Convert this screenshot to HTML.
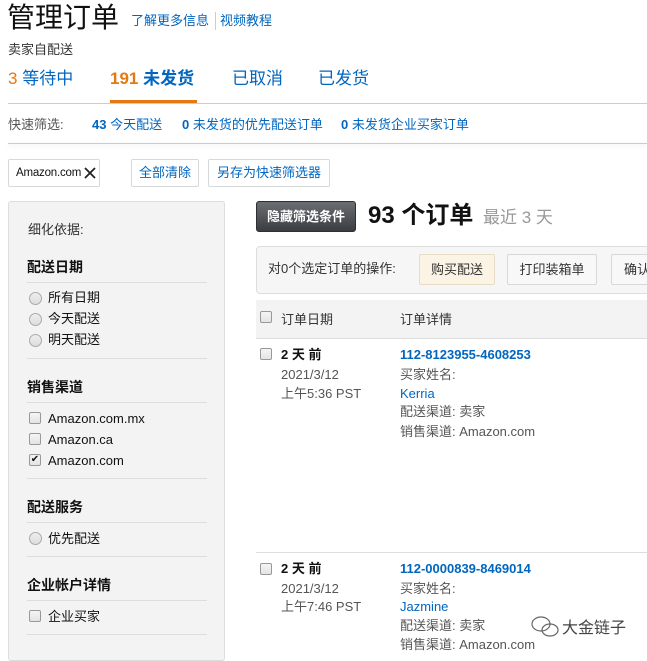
<!DOCTYPE html>
<html><head><meta charset="utf-8"><style>
*{margin:0;padding:0;box-sizing:border-box}
body{width:647px;height:655px;overflow:hidden;background:#fff;font-family:"Liberation Sans","Noto Sans CJK SC",sans-serif;color:#111;position:relative;font-size:13px;line-height:16px}
.a{position:absolute;white-space:nowrap}
.blue{color:#0066c0}
.g{color:#555}
.line{position:absolute;height:1px;background:#ddd}
.btn{position:absolute;border:1px solid #d5d9d9;border-radius:2px;background:#fff;text-align:center;font-size:13px;line-height:26px;white-space:nowrap}
.rad{position:absolute;width:13px;height:13px;border-radius:50%;border:1px solid #aaa;background:linear-gradient(#eee,#ddd)}
.cb{position:absolute;width:12px;height:12px;border:1px solid #999;border-radius:2px;background:linear-gradient(#f5f5f5,#e3e3e3)}
.side{font-size:13px}
.h{font-weight:bold;font-size:14px}
</style></head><body>
<div class="a" style="left:7px;top:2px;font-size:28px;line-height:32px;color:#111">管理订单</div>
<div class="a blue" style="left:131px;top:13px">了解更多信息</div>
<div style="position:absolute;left:215px;top:12px;width:1px;height:18px;background:#ccc"></div>
<div class="a blue" style="left:220px;top:13px">视频教程</div>
<div class="a" style="left:8px;top:42px;color:#333">卖家自配送</div>
<div class="a" style="left:8px;top:69px;font-size:17px;line-height:20px;color:#0066c0"><span style="color:#e47911">3</span> 等待中</div>
<div class="a" style="left:110px;top:69px;font-size:17px;line-height:20px;font-weight:bold;color:#0066c0"><span style="color:#e47911">191</span> 未发货</div>
<div class="a blue" style="left:232px;top:69px;font-size:17px;line-height:20px">已取消</div>
<div class="a blue" style="left:318px;top:69px;font-size:17px;line-height:20px">已发货</div>
<div class="line" style="left:8px;top:103px;width:639px;background:#ccc"></div>
<div style="position:absolute;left:110px;top:100px;width:87px;height:3px;background:#e47911"></div>
<div class="a" style="left:8px;top:117px;color:#555">快速筛选:</div>
<div class="a blue" style="left:92px;top:117px"><b>43</b> 今天配送</div>
<div class="a blue" style="left:182px;top:117px"><b>0</b> 未发货的优先配送订单</div>
<div class="a blue" style="left:341px;top:117px"><b>0</b> 未发货企业买家订单</div>
<div class="line" style="left:8px;top:143px;width:639px;background:#ccc;box-shadow:0 2px 4px #ddd"></div>
<div class="btn" style="left:8px;top:159px;width:92px;height:28px;color:#111;text-align:left;padding-left:7px;font-size:11.5px;letter-spacing:-0.2px">Amazon.com</div>
<svg style="position:absolute;left:84px;top:167px" width="12" height="12" viewBox="0 0 12 12" stroke="#222" stroke-width="1.8"><path d="M1 1L11 11M11 1L1 11"/></svg>
<div class="btn blue" style="left:131px;top:159px;width:68px;height:28px">全部清除</div>
<div class="btn blue" style="left:208px;top:159px;width:122px;height:28px">另存为快速筛选器</div>

<div style="position:absolute;left:8px;top:201px;width:217px;height:460px;background:#f3f3f3;border:1px solid #ddd;border-radius:3px"></div>
<div class="a side" style="left:28px;top:222px;color:#333">细化依据:</div>
<div class="a h" style="left:27px;top:259px">配送日期</div>
<div class="line" style="left:27px;top:282px;width:180px"></div>
<div class="rad" style="left:29px;top:292px"></div><div class="a side" style="left:48px;top:290px">所有日期</div>
<div class="rad" style="left:29px;top:313px"></div><div class="a side" style="left:48px;top:311px">今天配送</div>
<div class="rad" style="left:29px;top:334px"></div><div class="a side" style="left:48px;top:332px">明天配送</div>
<div class="line" style="left:27px;top:358px;width:180px"></div>
<div class="a h" style="left:27px;top:379px">销售渠道</div>
<div class="line" style="left:27px;top:402px;width:180px"></div>
<div class="cb" style="left:29px;top:412px"></div><div class="a side" style="left:48px;top:411px">Amazon.com.mx</div>
<div class="cb" style="left:29px;top:433px"></div><div class="a side" style="left:48px;top:432px">Amazon.ca</div>
<div class="cb" style="left:29px;top:454px;font-size:10px;line-height:10px;text-align:center">✔</div><div class="a side" style="left:48px;top:453px">Amazon.com</div>
<div class="line" style="left:27px;top:478px;width:180px"></div>
<div class="a h" style="left:27px;top:499px">配送服务</div>
<div class="line" style="left:27px;top:522px;width:180px"></div>
<div class="rad" style="left:29px;top:532px"></div><div class="a side" style="left:48px;top:531px">优先配送</div>
<div class="line" style="left:27px;top:556px;width:180px"></div>
<div class="a h" style="left:27px;top:577px">企业帐户详情</div>
<div class="line" style="left:27px;top:600px;width:180px"></div>
<div class="cb" style="left:29px;top:610px"></div><div class="a side" style="left:48px;top:609px">企业买家</div>
<div class="line" style="left:27px;top:634px;width:180px"></div>

<div style="position:absolute;left:256px;top:201px;width:100px;height:31px;background:linear-gradient(#6a6e72,#3a3d41);border:1px solid #2c2f33;border-radius:3px;color:#fff;font-size:13px;font-weight:bold;text-align:center;line-height:29px">隐藏筛选条件</div>
<div class="a" style="left:368px;top:202px;font-size:24px;line-height:28px;font-weight:bold">93 个订单</div>
<div class="a" style="left:483px;top:208px;font-size:17px;line-height:20px;color:#999">最近 3 天</div>

<div style="position:absolute;left:256px;top:246px;width:400px;height:48px;background:#f6f6f6;border:1px solid #ddd;border-radius:4px"></div>
<div class="a" style="left:268px;top:261px;color:#333">对0个选定订单的操作:</div>
<div class="btn" style="left:419px;top:254px;width:76px;height:31px;line-height:29px;background:#fbf3e4;border-color:#e8dcc4;color:#333">购买配送</div>
<div class="btn" style="left:507px;top:254px;width:90px;height:31px;line-height:29px;background:#f8f8f8;color:#333">打印装箱单</div>
<div class="btn" style="left:611px;top:254px;width:60px;height:31px;line-height:29px;background:#f8f8f8;color:#333;text-align:left;padding-left:12px">确认</div>

<div style="position:absolute;left:256px;top:300px;width:391px;height:39px;background:#f3f3f3;border-bottom:1px solid #ddd"></div>
<div class="cb" style="left:260px;top:311px"></div>
<div class="a" style="left:281px;top:312px;color:#333">订单日期</div>
<div class="a" style="left:400px;top:312px;color:#333">订单详情</div>

<div class="cb" style="left:260px;top:348px"></div>
<div class="a" style="left:281px;top:347px;font-weight:bold">2 天 前</div>
<div class="a g" style="left:281px;top:367px">2021/3/12</div>
<div class="a g" style="left:281px;top:386px">上午5:36 PST</div>
<div class="a blue" style="left:400px;top:347px;font-weight:bold">112-8123955-4608253</div>
<div class="a g" style="left:400px;top:367px">买家姓名:</div>
<div class="a blue" style="left:400px;top:386px">Kerria</div>
<div class="a g" style="left:400px;top:404px">配送渠道: 卖家</div>
<div class="a g" style="left:400px;top:424px">销售渠道: Amazon.com</div>
<div class="line" style="left:256px;top:552px;width:391px"></div>

<div class="cb" style="left:260px;top:563px"></div>
<div class="a" style="left:281px;top:561px;font-weight:bold">2 天 前</div>
<div class="a g" style="left:281px;top:581px">2021/3/12</div>
<div class="a g" style="left:281px;top:599px">上午7:46 PST</div>
<div class="a blue" style="left:400px;top:561px;font-weight:bold">112-0000839-8469014</div>
<div class="a g" style="left:400px;top:581px">买家姓名:</div>
<div class="a blue" style="left:400px;top:599px">Jazmine</div>
<div class="a g" style="left:400px;top:618px">配送渠道: 卖家</div>
<div class="a g" style="left:400px;top:637px">销售渠道: Amazon.com</div>

<svg style="position:absolute;left:530px;top:614px" width="30" height="26" viewBox="0 0 30 26" fill="none" stroke="#666" stroke-width="1.2"><ellipse cx="11" cy="10" rx="9" ry="7"/><ellipse cx="20" cy="16" rx="8" ry="6"/></svg>
<div class="a" style="left:562px;top:619px;font-size:16px;line-height:20px;color:#444">大金链子</div>
</body></html>
